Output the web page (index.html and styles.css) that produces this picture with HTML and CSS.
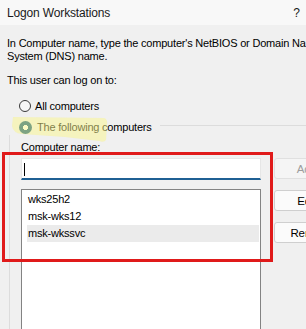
FILE: index.html
```html
<!DOCTYPE html>
<html lang="en">
<head>
<meta charset="utf-8">
<title>Logon Workstations</title>
<link rel="stylesheet" href="styles.css">
</head>
<body>
<div class="dialog">
  <div class="titlebar">
    <span class="title">Logon Workstations</span>
    <span class="help">?</span>
  </div>
  <div class="content">
    <p class="desc">In Computer name, type the computer's NetBIOS or Domain Name<br>System (DNS) name.</p>
    <p class="users">This user can log on to:</p>
    <div class="radio-row">
      <span class="radio"></span>
      <span class="radio-text">All computers</span>
    </div>
    <div class="group">
      <div class="radio-row legend">
        <span class="radio checked"></span>
        <span class="radio-text">The following computers</span>
      </div>
      <div class="group-body">
        <div class="field-label">Computer name:</div>
        <div class="textbox"><span class="caret"></span></div>
        <div class="buttons">
          <button class="btn" disabled>Add...</button>
          <button class="btn">Edit...</button>
          <button class="btn">Remove</button>
        </div>
        <ul class="list">
          <li class="item">wks25h2</li>
          <li class="item">msk-wks12</li>
          <li class="item hover">msk-wkssvc</li>
        </ul>
      </div>
    </div>
  </div>
  <svg class="highlight" width="100" height="30" viewBox="0 0 100 30">
    <path d="M3,1 L94,2 Q98,3 97,9 L96,24 Q94,27 89,25 L55,21 L12,18 Q3,17 2,10 Z"/>
  </svg>
  <div class="annotation"></div>
</div>
</body>
</html>
```

FILE: styles.css
```css
html, body {
  margin: 0;
  padding: 0;
  width: 306px;
  height: 329px;
  overflow: hidden;
  background: #f0f0f0;
}

.dialog {
  position: relative;
  width: 380px;
  height: 329px;
  font-family: "Liberation Sans", Arial, sans-serif;
  font-size: 11px;
  letter-spacing: -0.2px;
  color: #000;
}

.titlebar {
  height: 25px;
  display: flex;
  align-items: center;
  justify-content: space-between;
  padding: 0 0 0 7px;
  width: 299px;
  background: #f8f8f8;
}

.title {
  font-size: 12px;
  letter-spacing: -0.15px;
  color: #1a1a1a;
}

.help {
  font-size: 12px;
  letter-spacing: 0;
  padding-right: 6px;
  color: #1a1a1a;
}

.content {
  padding-left: 7px;
}

.desc {
  margin: 12px 0 0;
  line-height: 13px;
  white-space: nowrap;
}

.users {
  margin: 11px 0 0;
  line-height: 13px;
}

.radio-row {
  display: flex;
  align-items: center;
  height: 16px;
  margin-top: 11px;
  padding-left: 12px;
}

.radio {
  width: 12px;
  height: 12px;
  box-sizing: border-box;
  border: 1px solid #3a3a3a;
  border-radius: 50%;
  background: #f6f6f6;
  margin-right: 4px;
  flex: none;
}

.radio.checked {
  border: none;
  background: radial-gradient(circle, #ffffff 0 2.3px, #00507a 2.8px);
  width: 13px;
  height: 13px;
}

.group {
  margin: 11px 0 0 2px;
  border-top: 1px solid #dcdcdc;
  border-left: 1px solid #dcdcdc;
}

.legend {
  margin: -7px 0 0 -2px;
  padding-left: 11px;
  width: 141px;
  background: #f0f0f0;
}

.legend .radio-text {
  margin-left: 1px;
}

.group-body {
  display: grid;
  grid-template-columns: 240px 75px;
  column-gap: 13px;
  margin-left: 11px;
  padding-top: 6px;
}

.field-label {
  grid-column: 1;
  grid-row: 1;
  line-height: 13px;
  margin-bottom: 4px;
}

.textbox {
  grid-column: 1;
  grid-row: 2;
  height: 22px;
  box-sizing: border-box;
  background: #ffffff;
  border: 1px solid #e6e6e6;
  border-bottom: 2px solid #1f6094;
  padding: 4px 0 0 2px;
}

.caret {
  display: block;
  width: 1px;
  height: 13px;
  background: #000;
}

.buttons {
  grid-column: 2;
  grid-row: 2 / span 2;
  align-self: start;
  display: flex;
  flex-direction: column;
  gap: 11px;
}

.btn {
  height: 21px;
  box-sizing: border-box;
  margin: 0;
  padding: 0;
  font-family: inherit;
  font-size: 11.5px;
  letter-spacing: -0.1px;
  color: #000;
  background: #fbfbfb;
  border: 1px solid #cfcfcf;
  border-radius: 3px;
}

.btn:disabled {
  background: #f5f5f5;
  border-color: #e0e0e0;
  color: #9d9d9d;
}

.list {
  grid-column: 1;
  grid-row: 3;
  margin: 9px 0 0;
  padding: 1px 0 0;
  list-style: none;
  height: 160px;
  background: #ffffff;
  border: 1px solid #838383;
}

.item {
  height: 17px;
  line-height: 17px;
  margin: 0 1px 0 5px;
  padding-left: 1px;
}

.item.hover {
  background: #ebebeb;
}

.highlight {
  position: absolute;
  left: 10px;
  top: 116px;
  pointer-events: none;
}

.highlight path {
  fill: rgba(250, 245, 140, 0.5);
}

.annotation {
  position: absolute;
  left: 2px;
  top: 152px;
  width: 271px;
  height: 110px;
  box-sizing: border-box;
  border: 3px solid #e01a1a;
  pointer-events: none;
}
```
